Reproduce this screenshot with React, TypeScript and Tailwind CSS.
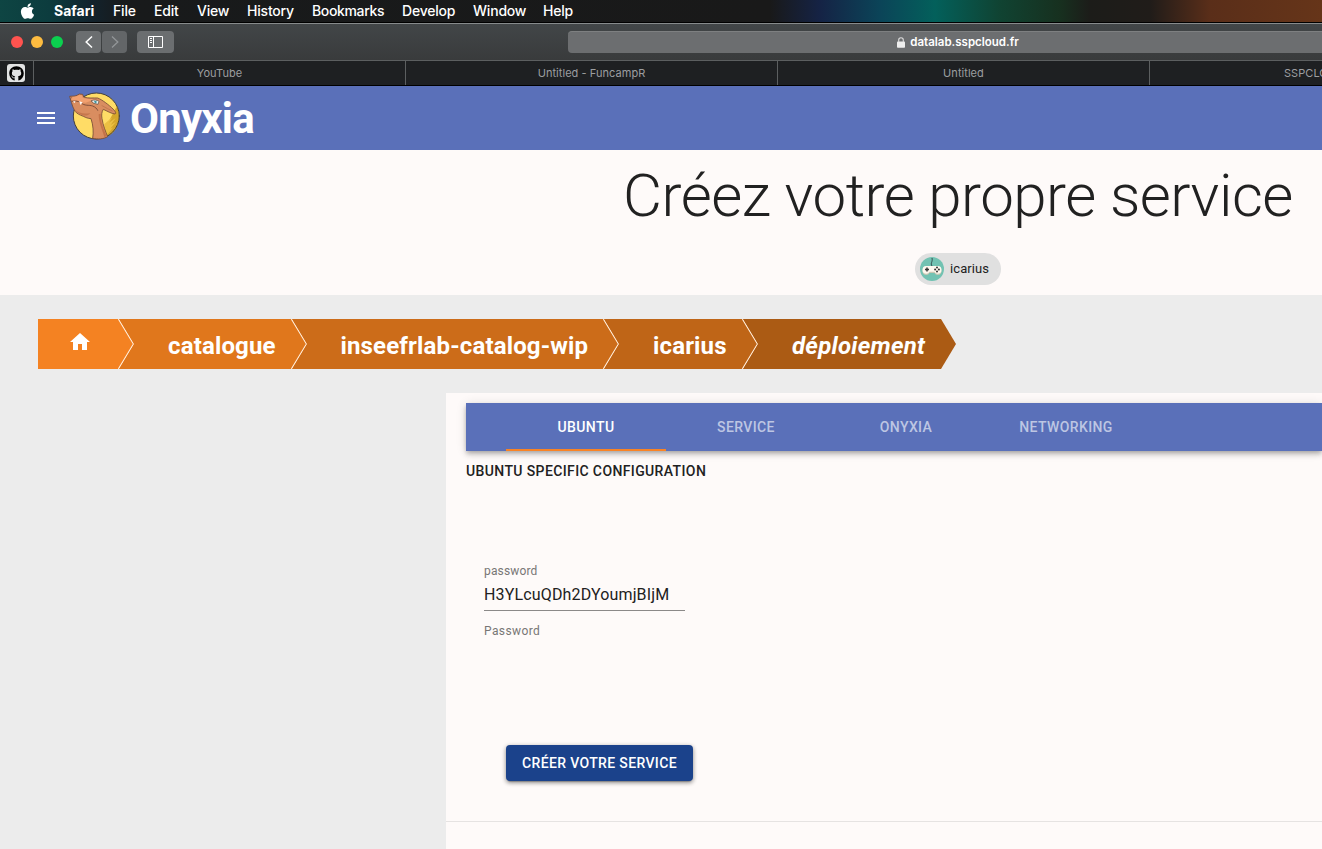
import React from "react";
import { FaApple, FaGithub } from "react-icons/fa";

const menu = [
  { label: "File", box: "w-[41px]" },
  { label: "Edit", box: "w-[43px]" },
  { label: "View", box: "w-[50px]" },
  { label: "History", box: "w-[65px]" },
  { label: "Bookmarks", box: "w-[90px] tracking-[-0.35px]" },
  { label: "Develop", box: "w-[71px]" },
  { label: "Window", box: "w-[70px]" },
  { label: "Help", box: "w-[60px]" },
];

const bookmarks = [
  { label: "YouTube", box: "text-center" },
  { label: "Untitled - FuncampR", box: "text-center" },
  { label: "Untitled", box: "text-center" },
  { label: "SSPCLOUD", box: "pl-[134px]" },
];

const crumbs = [
  { label: "catalogue", box: "w-[189px] z-40 bg-[#e0771c] pl-[50px]" },
  { label: "inseefrlab-catalog-wip", box: "w-[328px] z-30 bg-[#cc6c19] pl-[49.5px]" },
  { label: "icarius", box: "w-[155px] z-20 bg-[#bf6517] pl-[50px]" },
  { label: "déploiement", box: "w-[214px] z-10 bg-[#ab5b14] pl-[50px] italic tracking-[0.25px]" },
];

function MenuBar() {
  return (
    <div className="flex h-[23px] items-center border-b border-black bg-[linear-gradient(90deg,#0e4543_0px,#0c3c3e_50px,#12232d_90px,#181a1b_125px,#191919_770px,#152345_820px,#0b4458_880px,#03605b_935px,#104332_1000px,#17301f_1060px,#1c1c19_1090px,#201c19_1150px,#5a2e19_1210px,#663519_1322px)] text-[14px] leading-[22px] font-medium text-white">
      <FaApple className="mb-px ml-[20px] h-[18px] w-[15px]" />
      <span className="ml-[19px] w-[59px] font-bold">Safari</span>
      {menu.map((m) => (
        <span key={m.label} className={`tracking-[-0.2px] ${m.box} shrink-0 whitespace-nowrap`}>{m.label}</span>
      ))}
    </div>
  );
}

function Toolbar() {
  return (
    <div className="flex h-[37px] items-center border-t border-[#878b8c] bg-linear-to-b from-[#424648] to-[#393b3c]">
      <div className="ml-[11px] flex shrink-0 gap-2">
        <i className="size-3 rounded-full bg-[#ff534f]" />
        <i className="size-3 rounded-full bg-[#fdbc40]" />
        <i className="size-3 rounded-full bg-[#0bd04f]" />
      </div>
      <div className="ml-[13px] flex shrink-0 gap-px">
        <div className="flex h-[22px] w-[25px] items-center justify-center rounded bg-[#6b6e70]">
          <svg width="10" height="14" viewBox="0 0 10 14" fill="none" stroke="#fff" strokeWidth="1.5"><path d="M8 1.5 2.2 7 8 12.5" /></svg>
        </div>
        <div className="flex h-[22px] w-[25px] items-center justify-center rounded bg-[#636668]">
          <svg width="10" height="14" viewBox="0 0 10 14" fill="none" stroke="#939698" strokeWidth="1.3"><path d="M2 1.5 7.8 7 2 12.5" /></svg>
        </div>
      </div>
      <div className="ml-[10px] flex h-[22px] w-[37px] shrink-0 items-center justify-center rounded bg-[#6b6e70]">
        <svg width="15" height="12" viewBox="0 0 15 12" fill="none" stroke="#fff"><path d="M.5.5h14v11H.5zM5.5.5v11M2 2.500h2M2 4.500h2M2 6.500h2" /></svg>
      </div>
      <div className="ml-[394px] flex h-[22px] w-[780px] shrink-0 items-center justify-center rounded border-t border-[#7e8081] bg-[#6c6e70] text-[11.5px] font-semibold text-white">
        <svg className="mr-[5px]" width="8" height="11" viewBox="0 0 8 11"><rect y="4.5" width="8" height="6.2" rx=".8" fill="#eee" /><path d="M1.7 5V3a2.3 2.3 0 0 1 4.6 0v2" fill="none" stroke="#ddd" strokeWidth="1.1" /></svg>
        <span className="pt-px">datalab.sspcloud.fr</span>
      </div>
    </div>
  );
}

function TabStrip() {
  return (
    <div className="flex h-[26px] border-t border-b border-t-[#5c5f60] border-b-black bg-[#1e2022] text-[11px] leading-[24px] text-[#9c9ea0]">
      <div className="w-[33px] shrink-0 pt-[3px] pl-[7px]">
        <div className="flex size-[18px] items-center justify-center rounded-[3px] bg-[#e2e3e3] text-black"><FaGithub size={15} /></div>
      </div>
      {bookmarks.map((b) => (
        <div key={b.label} className={`${b.box} w-[372px] shrink-0 border-l border-[#5c5f60] tracking-[0.05px]`}>{b.label}</div>
      ))}
    </div>
  );
}

function Logo() {
  return (
    <svg className="mt-[2px] ml-[8px] shrink-0 self-start" width="58" height="56" viewBox="0 0 174 168" strokeLinejoin="round" strokeLinecap="round">
      <circle cx="91" cy="84" r="69" fill="#ffdc66" />
      <path d="M153 54C169 94 152 137 122 145l-6-22z" fill="#d5a62b" />
      <path d="m115 108 24-20-10 16 20-14-15 21 16-10-17 21 9-4-21 25-6 3z" fill="#ecc043" />
      <circle cx="91" cy="84" r="69" fill="none" stroke="#45403b" strokeWidth="3" />
      <path d="M80 151C83 133 82 113 75 92C65 91 60 89 52 85C39 80 32 76 27 70C22 62 19 52 16 43L11 25L26 24L33 22L40 18L50 19L53 27C67 32 83 29 95 30C108 35 128 50 141 63C149 71 151 76 147 78C136 77 123 69 112 64C107 71 106 81 108 92C111 112 119 131 125 146C111 154 96 154 80 151Z" fill="#d98d60" stroke="#744b35" strokeWidth="2.500" />
      <path d="M14 27L27 26L41 21L48 22L50 29C66 35 80 32 91 33L75 38L59 44L44 42L31 37L17 36Z" fill="#f2a06f" />
      <path d="M25 64C39 77 57 79 73 75C66 84 56 84 46 80C36 76 29 71 25 64Z" fill="#c6774d" />
      <path d="M98 79C98 105 110 128 115 147L122 145C112 119 103 103 104 77Z" fill="#c57348" />
      <path d="M76 38C84 34 93 36 99 40L96 49L84 46Z" fill="#e9eeeb" stroke="#574940" strokeWidth="2" />
      <path d="M84 38L92 40L91 46L86 44Z" fill="#38929e" />
      <path d="M18 40C29 40 37 38 44 44C57 55 68 50 80 54C88 57 93 62 95 67" fill="none" stroke="#6e4131" strokeWidth="2.500" />
      <path d="m40 40 4 10 5-7M22 40l3 5 3-5" fill="#fff" stroke="#fff" strokeWidth="1" />
      <path d="M108 53C119 59 130 65 139 69" fill="none" stroke="#b66e49" strokeWidth="2" />
      <circle cx="17" cy="29" r="1.500" fill="#744332" />
    </svg>
  );
}

function GamepadAvatar() {
  return (
    <svg width="24" height="24" viewBox="0 0 24 24">
      <circle cx="12" cy="12" r="12" fill="#72c2b2" />
      <path d="M12 9c-2-3 1-4 0-8" fill="none" stroke="#354b4e" />
      <path d="M6 10Q2.500 10 2.500 14q0 4 4 4 2 0 3-2h5q1 2 3 2 4 0 4-4 0-4-3.500-4z" fill="#c9c7b3" />
      <path d="M6 9Q2.500 9 2.500 13q0 3.800 4 3.800 2 0 3-2h5q1 2 3 2 4 0 4-3.800 0-4-3.500-4z" fill="#fff8ef" />
      <path d="M7 10.500v4M5 12.500h4" stroke="#333" strokeWidth="1.500" />
      <g fill="#333"><circle cx="17" cy="10.600" r="1" /><circle cx="17" cy="14.400" r="1" /><circle cx="15.100" cy="12.500" r="1" /><circle cx="18.900" cy="12.500" r="1" /></g>
    </svg>
  );
}

function Separator() {
  return (
    <svg className="absolute top-0 right-0" width="16" height="50" viewBox="0 0 16 50" fill="none" stroke="#ffeedd" strokeWidth="1.300"><path d="M.5 0l15 25L.5 50" /></svg>
  );
}

function Breadcrumbs() {
  const shape = "relative -mr-4 h-[50px] shrink-0 [clip-path:polygon(0_0,calc(100%-15px)_0,100%_50%,calc(100%-15px)_100%,0_100%)]";
  return (
    <nav className="isolate flex pt-6 pl-[38px] text-[24px] leading-[54px] font-bold tracking-[0.15px] text-white">
      <div className={`${shape} z-50 w-[96px] bg-[#f48222] pt-[11px] pl-[30px]`}>
        <svg width="24" height="24" viewBox="0 0 24 24" fill="#fff"><path d="M10 20v-6h4v6h5v-8h3L12 3 2 12h3v8z" /></svg>
        <Separator />
      </div>
      {crumbs.map((c, i) => (
        <div key={c.label} className={`${shape} ${c.box} whitespace-nowrap`}>
          {c.label}
          {i < 3 && <Separator />}
        </div>
      ))}
    </nav>
  );
}

function Panel() {
  return (
    <main className="mt-6 ml-[446px] h-[456px] bg-[#fefaf9] pt-[10px]">
      <div className="ml-5 flex h-12 bg-[#5a70b9] pl-10 text-center text-[14px] leading-[49px] font-medium tracking-[0.38px] text-[#bdc6e3] shadow-[0_2px_4px_-1px_rgba(0,0,0,.2),0_4px_5px_rgba(0,0,0,.14),0_1px_10px_rgba(0,0,0,.12)]">
        <div className="w-40 border-b-2 border-[#f98325] text-white">UBUNTU</div>
        <div className="w-40">SERVICE</div>
        <div className="w-40">ONYXIA</div>
        <div className="w-40">NETWORKING</div>
      </div>
      <h2 className="mt-[8px] ml-5 text-[14px] leading-6 font-medium tracking-[0.38px]">UBUNTU SPECIFIC CONFIGURATION</h2>
      <div className="mt-[78px] ml-[38px] w-[201px]">
        <label className="block text-[12px] leading-5 tracking-[0.15px] text-[#787675]">password</label>
        <div className="h-[30px] border-b border-[#8b8988] text-[16px] leading-[27px] tracking-[0.15px]">H3YLcuQDh2DYoumjBIjM</div>
        <p className="mt-[10px] text-[12px] leading-5 tracking-[0.4px] text-[#787675]">Password</p>
      </div>
      <button className="mt-[104px] ml-[60px] block h-9 w-[187px] rounded bg-[#1b428b] text-[14px] font-medium tracking-[0.35px] text-white shadow-[0_3px_1px_-2px_rgba(0,0,0,.2),0_2px_4px_rgba(0,0,0,.3),0_1px_5px_rgba(0,0,0,.2)]">CRÉER VOTRE SERVICE</button>
      <hr className="mt-10 border-[#e6e3e2]" />
    </main>
  );
}

export default function App() {
  return (
    <div className="h-[849px] w-full overflow-hidden bg-[#ececec] font-['Roboto',sans-serif] text-[#212121]">
      <div className="font-['Inter',sans-serif]">
        <MenuBar />
        <Toolbar />
        <TabStrip />
      </div>
      <header className="flex h-16 items-center bg-[#5a70b9] pl-[34px] text-white">
        <svg className="shrink-0" width="24" height="24" viewBox="0 0 24 24" fill="#fff"><path d="M3 18h18v-2H3zm0-5h18v-2H3zm0-7v2h18V6z" /></svg>
        <Logo />
        <span className="ml-[6px] pt-[2px] text-[42px] leading-[62px] font-bold tracking-[-0.8px]">Onyxia</span>
      </header>
      <section className="flex h-[145px] w-[1916px] flex-col items-center bg-[#fefaf9]">
        <h1 className="mt-[9px] text-[60px] leading-[74px] font-light tracking-[-0.5px] whitespace-nowrap">Créez votre propre service</h1>
        <div className="mt-[20px] flex h-8 w-[86px] items-center gap-[6px] rounded-full bg-[#e0e0e0] pl-[5px] text-[13px] leading-8">
          <GamepadAvatar />
          <span className="tracking-[0.1px]">icarius</span>
        </div>
      </section>
      <Breadcrumbs />
      <Panel />
    </div>
  );
}
